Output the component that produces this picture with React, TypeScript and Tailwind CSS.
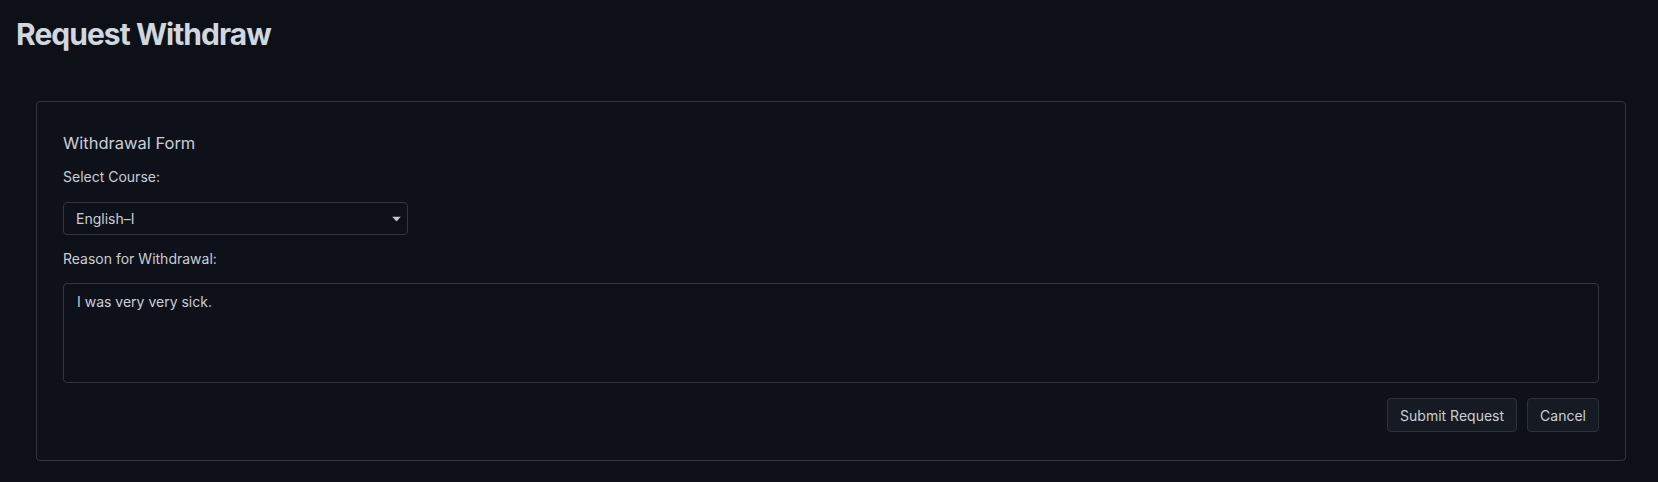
export default function App() {
  return (
    <div className="min-h-[482px] bg-[#0d1017] font-['Inter',sans-serif] text-[#c9ced6]">
      <h1 className="px-4 pt-4 text-[30px] font-bold leading-9 tracking-[-0.032em] text-[#d1d7e0]">Request Withdraw</h1>

      <div className="mt-[49px] ml-[36px] mr-[32px] rounded-[4px] border border-[#30353e] bg-[#0e1119] px-[26px] pt-[29px] pb-[28px]">
        <h2 className="text-[16.5px] leading-6 text-[#c9ced6]">Withdrawal Form</h2>

        <label className="mt-[12px] block text-[14px] leading-5">Select Course:</label>
        <div className="relative mt-[15px] w-[345px]">
          <select
            defaultValue="english-1"
            className="h-[33px] w-full appearance-none rounded-[4px] border border-[#30353e] bg-[#0e1119] pl-3 pr-8 text-[14px] text-[#c9ced6] outline-none"
          >
            <option value="english-1">English–I</option>
          </select>
          <svg
            className="pointer-events-none absolute right-[7px] top-1/2 -translate-y-1/2"
            width="9"
            height="5"
            viewBox="0 0 9 5"
          >
            <path d="M0 0 L9 0 L4.5 5 Z" fill="#c2c7cf" />
          </svg>
        </div>

        <label className="mt-[14px] block text-[14px] leading-5">Reason for Withdrawal:</label>
        <textarea
          defaultValue="I was very very sick."
          className="mt-[14px] block h-[100px] w-full resize-none rounded-[4px] border border-[#30353e] bg-[#0e1119] px-[13px] py-2 text-[14px] leading-5 text-[#c9ced6] outline-none"
        />

        <div className="mt-[15px] flex justify-end gap-[10px]">
          <button className="h-[34px] rounded-[4px] border border-[#2c313a] bg-[#161a22] px-3 text-[14px] text-[#c9ced6]">
            Submit Request
          </button>
          <button className="h-[34px] rounded-[4px] border border-[#2c313a] bg-[#161a22] px-3 text-[14px] text-[#c9ced6]">
            Cancel
          </button>
        </div>
      </div>
    </div>
  );
}
